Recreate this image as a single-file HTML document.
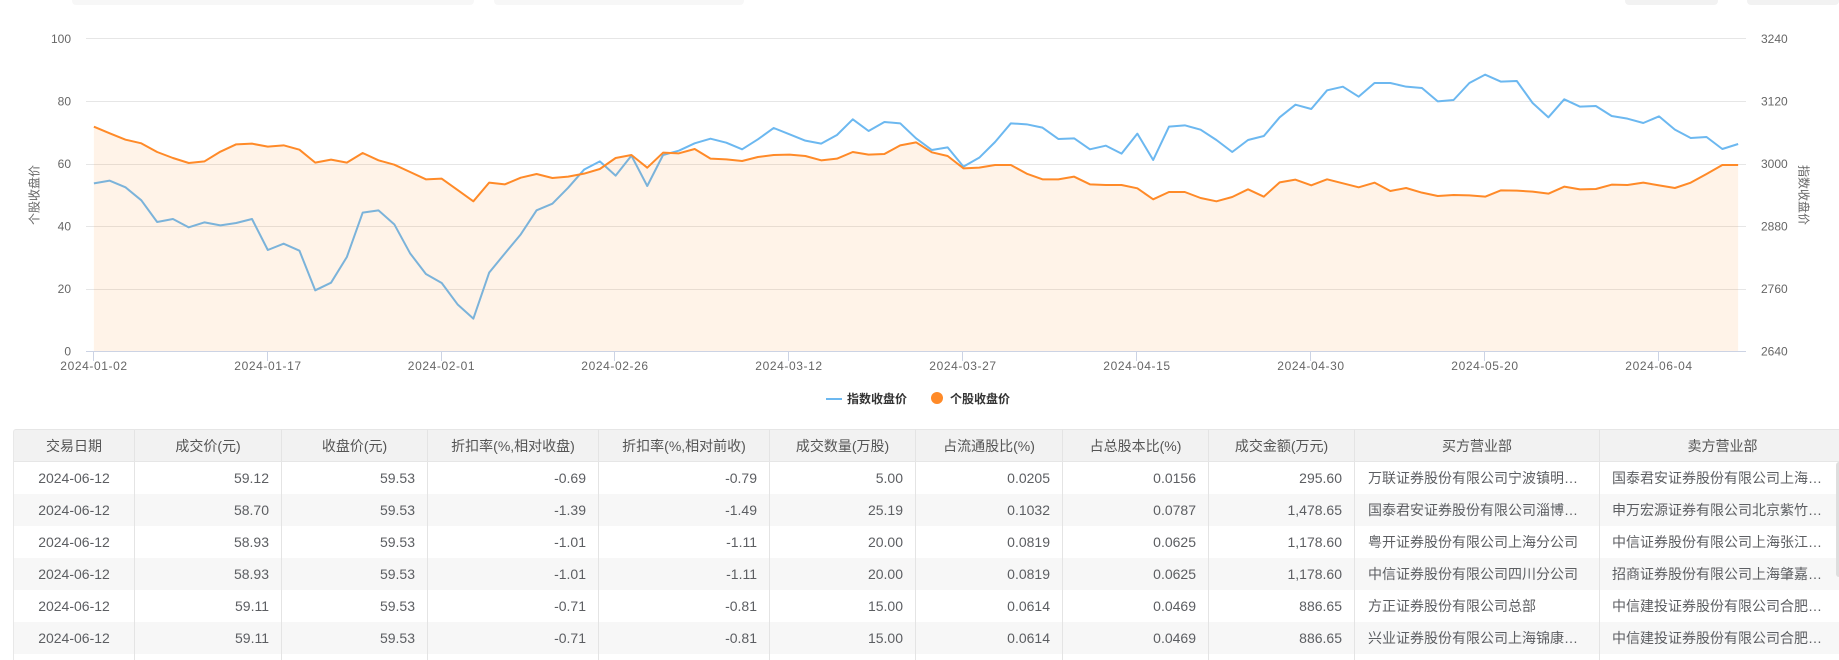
<!DOCTYPE html>
<html lang="zh-CN">
<head>
<meta charset="utf-8">
<title>大宗交易</title>
<style>
html,body{margin:0;padding:0;background:#fff;width:1839px;height:660px;overflow:hidden;}
#wrap{position:relative;width:1839px;height:660px;overflow:hidden;contain:strict;font-family:"Liberation Sans","Noto Sans CJK SC",sans-serif;}
.blk{position:absolute;top:0;height:5px;border-radius:0 0 4px 4px;}
svg.chart{position:absolute;left:0;top:0;}
svg text{font-family:"Liberation Sans","Noto Sans CJK SC",sans-serif;font-size:12px;fill:#666;}
svg .d{letter-spacing:.6px;text-anchor:middle;}
svg .l{text-anchor:end;}
svg .t{text-anchor:middle;font-family:"Noto Sans CJK SC","Liberation Sans",sans-serif;}
svg .lg{fill:#333;font-weight:700;font-family:"Noto Sans CJK SC","Liberation Sans",sans-serif;}
table{position:absolute;left:13px;top:429px;border-collapse:separate;border-spacing:0;table-layout:fixed;width:1833px;font-size:14px;color:#5c5e62;}
th{height:31px;padding:0;background:#f2f2f2;font-weight:400;text-align:center;color:#555;border-top:1px solid #e6e6e6;border-bottom:1px solid #e6e6e6;border-right:1px solid #e4e4e4;white-space:nowrap;overflow:hidden;}
td{height:32px;box-sizing:border-box;padding:0 12px;border-right:1px solid #e4e4e4;text-align:right;white-space:nowrap;overflow:hidden;}
td:first-child{text-align:center;padding:0;}
th:first-child,td:first-child{border-left:1px solid #e8e8e8;}
th:first-child{border-top-left-radius:3px;}
td.s{text-align:left;padding-left:13px;}
td.s:last-child{padding-left:12px;}
tr.g td{background:#f7f7f7;}
.bar{position:absolute;left:1836px;top:462px;width:3px;height:115px;background:#dedede;border-radius:3px 0 0 3px;}
</style>
</head>
<body>
<div id="wrap">
<div class="blk" style="left:72px;width:402px;background:#f7f7f7;"></div>
<div class="blk" style="left:494px;width:250px;background:#f7f7f7;"></div>
<div class="blk" style="left:1625px;width:93px;background:#f2f2f2;"></div>
<div class="blk" style="left:1747px;width:92px;background:#f2f2f2;"></div>

<svg class="chart" width="1839" height="425" viewBox="0 0 1839 425">
  <g stroke="#e6e6e6" stroke-width="1">
    <line x1="86" x2="1746" y1="38.5" y2="38.5"/>
    <line x1="86" x2="1746" y1="101.5" y2="101.5"/>
    <line x1="86" x2="1746" y1="164.5" y2="164.5"/>
    <line x1="86" x2="1746" y1="226.5" y2="226.5"/>
    <line x1="86" x2="1746" y1="289.5" y2="289.5"/>
  </g>
  <g stroke="#ccd3e4" stroke-width="1">
    <line x1="86" x2="1746" y1="351.5" y2="351.5"/>
    <line x1="93.5" x2="93.5" y1="351" y2="361"/>
    <line x1="267.5" x2="267.5" y1="351" y2="361"/>
    <line x1="441.5" x2="441.5" y1="351" y2="361"/>
    <line x1="614.5" x2="614.5" y1="351" y2="361"/>
    <line x1="788.5" x2="788.5" y1="351" y2="361"/>
    <line x1="962.5" x2="962.5" y1="351" y2="361"/>
    <line x1="1136.5" x2="1136.5" y1="351" y2="361"/>
    <line x1="1310.5" x2="1310.5" y1="351" y2="361"/>
    <line x1="1484.5" x2="1484.5" y1="351" y2="361"/>
    <line x1="1658.5" x2="1658.5" y1="351" y2="361"/>
  </g>

  <g transform="translate(93.9 0) scale(15.81 0.33333)">
    <!-- blue line -->
    <polyline fill="none" stroke="#6cb8f0" stroke-width="2" stroke-linejoin="round" vector-effect="non-scaling-stroke"
      points="0,550 1,542 2,562 3,601 4,666 5,657 6,682 7,667 8,676 9,669 10,657 11,750 12,731 13,752 14,871 15,848 16,771 17,638 18,631 19,673 20,760 21,822 22,849 23,913 24,956 25,818 26,760 27,703 28,631 29,611 30,563 31,509 32,484 33,527 34,467 35,558 36,465 37,452 38,430 39,416 40,428 41,448 42,418 43,384 44,403 45,422 46,431 47,405 48,358 49,393 50,366 51,370 52,415 53,450 54,442 55,500 56,473 57,426 58,370 59,373 60,383 61,417 62,415 63,448 64,437 65,461 66,401 67,480 68,380 69,376 70,389 71,420 72,456 73,420 74,408 75,352 76,314 77,327 78,271 79,260 80,290 81,249 82,249 83,260 84,264 85,304 86,300 87,249 88,224 89,245 90,243 91,309 92,352 93,298 94,320 95,318 96,348 97,356 98,369 99,349 100,389 101,414 102,411 103,447 104,432"/>
    <!-- orange area -->
    <polygon fill="rgb(255,138,40)" fill-opacity="0.105"
      points="0,1053 0,380 1,400 2,419 3,430 4,456 5,474 6,489 7,484 8,455 9,433 10,431 11,440 12,436 13,449 14,488 15,479 16,488 17,459 18,481 19,494 20,516 21,538 22,536 23,570 24,604 25,548 26,553 27,533 28,522 29,534 30,530 31,521 32,507 33,474 34,465 35,503 36,458 37,460 38,447 39,476 40,478 41,483 42,471 43,465 44,464 45,468 46,481 47,476 48,456 49,464 50,462 51,436 52,427 53,457 54,468 55,505 56,503 57,495 58,495 59,521 60,538 61,538 62,530 63,553 64,555 65,555 66,565 67,598 68,576 69,576 70,594 71,604 72,591 73,568 74,590 75,547 76,539 77,556 78,538 79,550 80,562 81,548 82,573 83,564 84,578 85,588 86,585 87,586 88,590 89,571 90,572 91,575 92,581 93,560 94,568 95,567 96,554 97,555 98,548 99,556 100,564 101,548 102,522 103,495 104,495 104,1053"/>
    <!-- orange line -->
    <polyline fill="none" stroke="#ff8a28" stroke-width="2" stroke-linejoin="round" vector-effect="non-scaling-stroke"
      points="0,380 1,400 2,419 3,430 4,456 5,474 6,489 7,484 8,455 9,433 10,431 11,440 12,436 13,449 14,488 15,479 16,488 17,459 18,481 19,494 20,516 21,538 22,536 23,570 24,604 25,548 26,553 27,533 28,522 29,534 30,530 31,521 32,507 33,474 34,465 35,503 36,458 37,460 38,447 39,476 40,478 41,483 42,471 43,465 44,464 45,468 46,481 47,476 48,456 49,464 50,462 51,436 52,427 53,457 54,468 55,505 56,503 57,495 58,495 59,521 60,538 61,538 62,530 63,553 64,555 65,555 66,565 67,598 68,576 69,576 70,594 71,604 72,591 73,568 74,590 75,547 76,539 77,556 78,538 79,550 80,562 81,548 82,573 83,564 84,578 85,588 86,585 87,586 88,590 89,571 90,572 91,575 92,581 93,560 94,568 95,567 96,554 97,555 98,548 99,556 100,564 101,548 102,522 103,495 104,495"/>
  </g>

  <!-- left axis labels -->
  <text class="l" x="71" y="43">100</text>
  <text class="l" x="71" y="105.5">80</text>
  <text class="l" x="71" y="168">60</text>
  <text class="l" x="71" y="230.5">40</text>
  <text class="l" x="71" y="293">20</text>
  <text class="l" x="71" y="355.5">0</text>
  <!-- right axis labels -->
  <text x="1761" y="43">3240</text>
  <text x="1761" y="105.5">3120</text>
  <text x="1761" y="168">3000</text>
  <text x="1761" y="230.5">2880</text>
  <text x="1761" y="293">2760</text>
  <text x="1761" y="355.5">2640</text>
  <!-- x axis labels -->
  <text class="d" x="94" y="370">2024-01-02</text>
  <text class="d" x="268" y="370">2024-01-17</text>
  <text class="d" x="441.5" y="370">2024-02-01</text>
  <text class="d" x="615" y="370">2024-02-26</text>
  <text class="d" x="789" y="370">2024-03-12</text>
  <text class="d" x="963" y="370">2024-03-27</text>
  <text class="d" x="1137" y="370">2024-04-15</text>
  <text class="d" x="1311" y="370">2024-04-30</text>
  <text class="d" x="1485" y="370">2024-05-20</text>
  <text class="d" x="1659" y="370">2024-06-04</text>
  <!-- axis titles -->
  <text class="t" transform="translate(38.5 195) rotate(-90)">个股收盘价</text>
  <text class="t" transform="translate(1799.5 195) rotate(90)">指数收盘价</text>
  <!-- legend -->
  <line x1="826" x2="842" y1="399" y2="399" stroke="#6cb8f0" stroke-width="2"/>
  <text class="lg" x="847" y="403">指数收盘价</text>
  <circle cx="937" cy="398" r="6" fill="#ff8a28"/>
  <text class="lg" x="950" y="403">个股收盘价</text>
</svg>

<table>
  <colgroup>
    <col style="width:122px"><col style="width:147px"><col style="width:146px"><col style="width:171px"><col style="width:171px"><col style="width:146px"><col style="width:147px"><col style="width:146px"><col style="width:146px"><col style="width:245px"><col style="width:246px">
  </colgroup>
  <tr><th>交易日期</th><th>成交价(元)</th><th>收盘价(元)</th><th>折扣率(%,相对收盘)</th><th>折扣率(%,相对前收)</th><th>成交数量(万股)</th><th>占流通股比(%)</th><th>占总股本比(%)</th><th>成交金额(万元)</th><th>买方营业部</th><th>卖方营业部</th></tr>
  <tr><td>2024-06-12</td><td>59.12</td><td>59.53</td><td>-0.69</td><td>-0.79</td><td>5.00</td><td>0.0205</td><td>0.0156</td><td>295.60</td><td class="s">万联证券股份有限公司宁波镇明…</td><td class="s">国泰君安证券股份有限公司上海…</td></tr>
  <tr class="g"><td>2024-06-12</td><td>58.70</td><td>59.53</td><td>-1.39</td><td>-1.49</td><td>25.19</td><td>0.1032</td><td>0.0787</td><td>1,478.65</td><td class="s">国泰君安证券股份有限公司淄博…</td><td class="s">申万宏源证券有限公司北京紫竹…</td></tr>
  <tr><td>2024-06-12</td><td>58.93</td><td>59.53</td><td>-1.01</td><td>-1.11</td><td>20.00</td><td>0.0819</td><td>0.0625</td><td>1,178.60</td><td class="s">粤开证券股份有限公司上海分公司</td><td class="s">中信证券股份有限公司上海张江…</td></tr>
  <tr class="g"><td>2024-06-12</td><td>58.93</td><td>59.53</td><td>-1.01</td><td>-1.11</td><td>20.00</td><td>0.0819</td><td>0.0625</td><td>1,178.60</td><td class="s">中信证券股份有限公司四川分公司</td><td class="s">招商证券股份有限公司上海肇嘉…</td></tr>
  <tr><td>2024-06-12</td><td>59.11</td><td>59.53</td><td>-0.71</td><td>-0.81</td><td>15.00</td><td>0.0614</td><td>0.0469</td><td>886.65</td><td class="s">方正证券股份有限公司总部</td><td class="s">中信建投证券股份有限公司合肥…</td></tr>
  <tr class="g"><td>2024-06-12</td><td>59.11</td><td>59.53</td><td>-0.71</td><td>-0.81</td><td>15.00</td><td>0.0614</td><td>0.0469</td><td>886.65</td><td class="s">兴业证券股份有限公司上海锦康…</td><td class="s">中信建投证券股份有限公司合肥…</td></tr>
  <tr><td></td><td></td><td></td><td></td><td></td><td></td><td></td><td></td><td></td><td></td><td></td></tr>
</table>
<div class="bar"></div>
</div>
</body>
</html>
